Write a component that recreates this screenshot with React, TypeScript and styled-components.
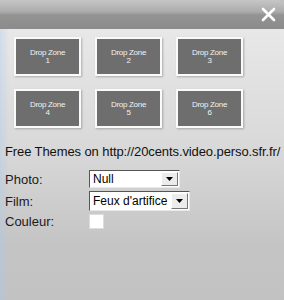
import React from 'react'
import styled, { createGlobalStyle } from 'styled-components'

const GlobalStyle = createGlobalStyle`
    html, body {
        margin: 0;
        padding: 0;
        background: #c0c0c0;
    }
`
const Window = styled.div`
    width: 284px;
    height: 300px;
    display: flex;
    flex-direction: column;
    overflow: hidden;
    font-family: "Liberation Sans", Arial, sans-serif;
    border-top-right-radius: 8px;
`
const TitleBar = styled.div`
    height: 29px;
    flex-shrink: 0;
    display: flex;
    justify-content: flex-end;
    align-items: center;
    padding-right: 8px;
    background: linear-gradient(#c6c6c6 0, #acacac 40%, #939393 52%, #8b8b8b 100%);
`
const Body = styled.div`
    flex: 1;
    display: flex;
    flex-direction: column;
    padding: 8px 0 0 5px;
    background: linear-gradient(90deg, rgba(170, 200, 235, 0.35) 0, rgba(230, 230, 230, 0) 10px),
        linear-gradient(#e8e8e8 0, #d8d8d8 45%, #c4c4c4 80%, #c2c2c2 100%);
`
const ZoneGrid = styled.div`
    display: grid;
    grid-template-columns: repeat(3, 67px);
    column-gap: 14px;
    row-gap: 13px;
    padding-left: 9px;
`
const Zone = styled.div`
    height: 35px;
    border: 2px solid #fafafa;
    background: #6e6e6e;
    box-shadow: 1px 1px 2px rgba(0, 0, 0, 0.25);
    color: #f2f2f2;
    font-size: 8px;
    line-height: 8px;
    display: flex;
    flex-direction: column;
    align-items: center;
    justify-content: center;
    letter-spacing: -0.3px;
`
const Credit = styled.div`
    margin-top: 16px;
    font-size: 13px;
    color: #111;
    white-space: nowrap;
    letter-spacing: -0.1px;
`
const Form = styled.div`
    display: grid;
    grid-template-columns: 84px auto;
    row-gap: 3px;
    margin-top: 11px;
    align-items: center;
    justify-items: start;
`
const Label = styled.div`
    font-size: 13px;
    color: #1a1a1a;
`
const Select = styled.div<{ $w: number; $h: number }>`
    width: ${p => p.$w}px;
    height: ${p => p.$h}px;
    box-sizing: border-box;
    background: #fff;
    border: 1px solid;
    border-color: #555 #e8e8e8 #e8e8e8 #555;
    display: flex;
    align-items: center;
    font-size: 12px;
    color: #000;
    padding-left: 3px;
`
const SelectText = styled.span`
    flex: 1;
    white-space: nowrap;
`
const Arrow = styled.div`
    width: 15px;
    align-self: stretch;
    margin: 1px;
    background: #ececec;
    border: 1px solid;
    border-color: #fff #777 #777 #fff;
    display: flex;
    align-items: center;
    justify-content: center;
`
const Swatch = styled.div`
    width: 15px;
    height: 15px;
    background: #fff;
    border: 1px solid #ddd;
    box-sizing: border-box;
`

const zones = [1, 2, 3, 4, 5, 6]

function DropArrow() {
    return (
        <svg width="7" height="4" viewBox="0 0 7 4">
            <path d="M0 0h7L3.5 4z" fill="#000" />
        </svg>
    )
}

const App = () => {
    return (
        <Window>
            <GlobalStyle />
            <TitleBar>
                <svg width="15" height="15" viewBox="0 0 15 15">
                    <path d="M2 2L13 13M13 2L2 13" stroke="#fff" strokeWidth="2.6" strokeLinecap="round" />
                </svg>
            </TitleBar>
            <Body>
                <ZoneGrid>
                    {zones.map(n => (
                        <Zone key={n}>
                            <span>Drop Zone</span>
                            <span>{n}</span>
                        </Zone>
                    ))}
                </ZoneGrid>
                <Credit>Free Themes on http://20cents.video.perso.sfr.fr/</Credit>
                <Form>
                    <Label>Photo:</Label>
                    <Select $w={91} $h={18}>
                        <SelectText>Null</SelectText>
                        <Arrow><DropArrow /></Arrow>
                    </Select>
                    <Label>Film:</Label>
                    <Select $w={101} $h={20}>
                        <SelectText>Feux d'artifice</SelectText>
                        <Arrow><DropArrow /></Arrow>
                    </Select>
                    <Label>Couleur:</Label>
                    <Swatch />
                </Form>
            </Body>
        </Window>
    )
}

export default App
